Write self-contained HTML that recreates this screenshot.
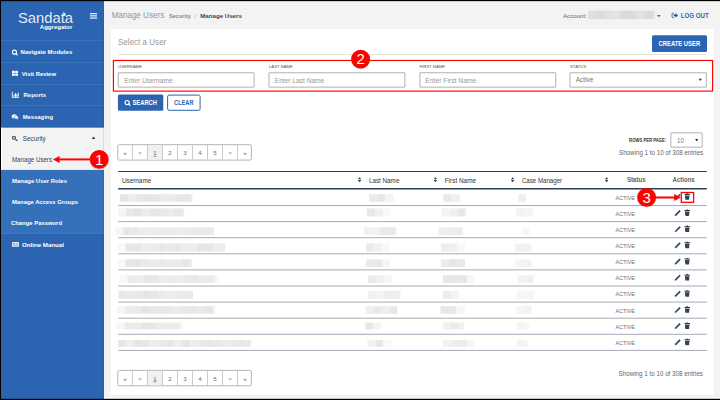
<!DOCTYPE html>
<html><head><meta charset="utf-8"><title>Manage Users</title>
<style>
*{box-sizing:border-box;margin:0;padding:0}
html,body{width:720px;height:400px;overflow:hidden;background:#f3f3f3}
svg{position:absolute;left:0;top:0;font-family:"Liberation Sans","DejaVu Sans",sans-serif}
text{white-space:pre}
</style></head><body>
<svg width="720" height="400" viewBox="0 0 720 400">
<rect x="0.00" y="0.00" width="103.80" height="400.00" fill="#2b64b1"/>
<rect x="1.00" y="40.00" width="102.80" height="0.80" fill="#3f77c2"/>
<rect x="1.00" y="62.00" width="102.80" height="0.80" fill="#3f77c2"/>
<rect x="1.00" y="84.00" width="102.80" height="0.80" fill="#3f77c2"/>
<rect x="1.00" y="105.00" width="102.80" height="0.80" fill="#3f77c2"/>
<rect x="1.00" y="127.40" width="102.80" height="42.50" fill="#f3f3f3"/>
<rect x="1.00" y="127.40" width="1.20" height="42.50" fill="#fff"/>
<rect x="1.00" y="169.20" width="102.80" height="0.70" fill="#fbfbfb"/>
<rect x="1.00" y="126.80" width="102.80" height="0.60" fill="#2559a6"/>
<rect x="1.00" y="169.90" width="102.80" height="64.10" fill="#3570bb"/>
<rect x="1.00" y="233.20" width="102.80" height="0.70" fill="#457cc3"/>
<rect x="102.90" y="0.00" width="0.90" height="127.40" fill="#2259aa"/>
<rect x="102.90" y="169.90" width="0.90" height="64.00" fill="#2d65b2"/>
<rect x="102.90" y="233.90" width="0.90" height="166.10" fill="#2259aa"/>
<text x="20.50" y="54.00" font-size="6.05" font-weight="bold" fill="#fff" textLength="51.80" lengthAdjust="spacingAndGlyphs">Navigate Modules</text>
<text x="21.70" y="75.90" font-size="6.05" font-weight="bold" fill="#fff" textLength="34.30" lengthAdjust="spacingAndGlyphs">Visit Review</text>
<text x="23.60" y="97.20" font-size="6.05" font-weight="bold" fill="#fff" textLength="22.40" lengthAdjust="spacingAndGlyphs">Reports</text>
<text x="22.70" y="119.00" font-size="6.05" font-weight="bold" fill="#fff" textLength="30.30" lengthAdjust="spacingAndGlyphs">Messaging</text>
<text x="22.70" y="140.50" font-size="6.3" fill="#394050" textLength="23.10" lengthAdjust="spacingAndGlyphs">Security</text>
<text x="12.00" y="161.70" font-size="6.3" fill="#394050" textLength="40.00" lengthAdjust="spacingAndGlyphs">Manage Users</text>
<text x="12.00" y="183.00" font-size="6.05" font-weight="bold" fill="#fff" textLength="55.00" lengthAdjust="spacingAndGlyphs">Manage User Roles</text>
<text x="12.00" y="204.40" font-size="6.05" font-weight="bold" fill="#fff" textLength="66.00" lengthAdjust="spacingAndGlyphs">Manage Access Groups</text>
<text x="11.00" y="225.30" font-size="6.05" font-weight="bold" fill="#fff" textLength="51.00" lengthAdjust="spacingAndGlyphs">Change Password</text>
<text x="22.00" y="247.00" font-size="6.05" font-weight="bold" fill="#fff" textLength="42.00" lengthAdjust="spacingAndGlyphs">Online Manual</text>
<text x="18.00" y="23.00" font-size="14.76" fill="#fff" stroke="#2b64b1" stroke-width=".16">Sandata</text>
<path d="M63.4 11.5L66.3 15.1L63.4 15.9Z" fill="#fff" fill-opacity=".92"/>
<text x="39.80" y="29.20" font-size="5.6" font-weight="bold" fill="#fff" textLength="32.60" lengthAdjust="spacingAndGlyphs">Aggregator</text>
<rect x="90.00" y="13.00" width="7.00" height="1.30" fill="#dfe8f5"/>
<rect x="90.00" y="15.20" width="7.00" height="1.30" fill="#dfe8f5"/>
<rect x="90.00" y="17.40" width="7.00" height="1.30" fill="#dfe8f5"/>
<text x="111.70" y="18.20" font-size="8.8" fill="#969696" textLength="52.50" lengthAdjust="spacingAndGlyphs">Manage Users</text>
<text x="169.00" y="17.70" font-size="5.57" font-weight="bold" fill="#888">Security</text>
<text x="194.30" y="17.70" font-size="5.6" fill="#aaa">/</text>
<text x="200.20" y="17.70" font-size="6.15" font-weight="bold" fill="#444">Manage Users</text>
<text x="563.00" y="17.80" font-size="6.17" fill="#666">Account:</text>
<rect x="588.30" y="10.70" width="66.00" height="8.40" fill="#dedede"/>
<text x="680.80" y="17.70" font-size="6.5" font-weight="bold" fill="#2b64b1" textLength="27.95" lengthAdjust="spacingAndGlyphs">LOG OUT</text>
<rect x="111.05" y="28.85" width="602.35" height="366.25" fill="#fff"/>
<text x="118.00" y="45.10" font-size="8.8" fill="#989898" textLength="48.30" lengthAdjust="spacingAndGlyphs">Select a User</text>
<rect x="652.00" y="35.30" width="55.00" height="16.70" fill="#2b64b1" rx="1.5"/>
<text x="658.50" y="46.20" font-size="6.6" font-weight="bold" fill="#fff" textLength="41.70" lengthAdjust="spacingAndGlyphs">CREATE USER</text>
<rect x="118.00" y="54.00" width="589.00" height="0.80" fill="#dcdcdc"/>
<text x="118.10" y="67.70" font-size="4.25" fill="#555" textLength="24.00" lengthAdjust="spacingAndGlyphs">USERNAME</text>
<text x="269.00" y="67.70" font-size="4.25" fill="#555" textLength="23.90" lengthAdjust="spacingAndGlyphs">LAST NAME</text>
<text x="419.40" y="67.70" font-size="4.25" fill="#555" textLength="25.80" lengthAdjust="spacingAndGlyphs">FIRST NAME</text>
<text x="570.00" y="67.70" font-size="4.25" fill="#555" textLength="16.25" lengthAdjust="spacingAndGlyphs">STATUS</text>
<rect x="118.35" y="72.75" width="135.80" height="14.40" fill="#fff" stroke="#a6aaa6" stroke-width=".9" rx="0.3"/>
<rect x="268.95" y="72.75" width="135.90" height="14.40" fill="#fff" stroke="#a6aaa6" stroke-width=".9" rx="0.3"/>
<rect x="419.85" y="72.75" width="135.95" height="14.40" fill="#fff" stroke="#a6aaa6" stroke-width=".9" rx="0.3"/>
<rect x="569.95" y="72.75" width="136.35" height="14.40" fill="#fff" stroke="#a6aaa6" stroke-width=".9" rx="0.3"/>
<text x="124.20" y="82.60" font-size="6.6" fill="#999" textLength="48.50" lengthAdjust="spacingAndGlyphs">Enter Username</text>
<text x="274.80" y="82.60" font-size="6.6" fill="#999" textLength="49.40" lengthAdjust="spacingAndGlyphs">Enter Last Name</text>
<text x="425.30" y="82.60" font-size="6.6" fill="#999" textLength="51.00" lengthAdjust="spacingAndGlyphs">Enter First Name</text>
<text x="575.75" y="82.40" font-size="6.6" fill="#777" textLength="17.75" lengthAdjust="spacingAndGlyphs">Active</text>
<rect x="117.90" y="94.60" width="45.40" height="16.20" fill="#2b64b1" rx="1.5"/>
<text x="132.50" y="105.20" font-size="6.6" font-weight="bold" fill="#fff" textLength="24.50" lengthAdjust="spacingAndGlyphs">SEARCH</text>
<rect x="167.60" y="95.10" width="32.50" height="15.20" fill="#fff" stroke="#2b64b1" stroke-width="1" rx="1.5"/>
<text x="174.10" y="105.20" font-size="6.6" font-weight="bold" fill="#2b64b1" textLength="19.40" lengthAdjust="spacingAndGlyphs">CLEAR</text>
<rect x="117.80" y="144.70" width="133.60" height="15.40" fill="#fff" stroke="#b4b4b4" stroke-width="1" rx="1.5"/>
<rect x="147.80" y="145.20" width="14.60" height="14.40" fill="#f1f1f1"/>
<rect x="131.92" y="145.20" width="0.80" height="14.40" fill="#bdbdbd"/>
<rect x="146.94" y="145.20" width="0.80" height="14.40" fill="#bdbdbd"/>
<rect x="161.96" y="145.20" width="0.80" height="14.40" fill="#bdbdbd"/>
<rect x="176.98" y="145.20" width="0.80" height="14.40" fill="#bdbdbd"/>
<rect x="192.00" y="145.20" width="0.80" height="14.40" fill="#bdbdbd"/>
<rect x="207.02" y="145.20" width="0.80" height="14.40" fill="#bdbdbd"/>
<rect x="222.04" y="145.20" width="0.80" height="14.40" fill="#bdbdbd"/>
<rect x="237.06" y="145.20" width="0.80" height="14.40" fill="#bdbdbd"/>
<text x="125.00" y="154.95" font-size="6.2" fill="#6e6e6e" text-anchor="middle">«</text>
<text x="140.00" y="154.95" font-size="6.2" fill="#6e6e6e" text-anchor="middle">&lt;</text>
<text x="155.00" y="154.95" font-size="6.2" fill="#6e6e6e" text-anchor="middle" text-decoration="underline">1</text>
<text x="170.00" y="154.95" font-size="6.2" fill="#6e6e6e" text-anchor="middle">2</text>
<text x="185.00" y="154.95" font-size="6.2" fill="#6e6e6e" text-anchor="middle">3</text>
<text x="200.00" y="154.95" font-size="6.2" fill="#6e6e6e" text-anchor="middle">4</text>
<text x="215.00" y="154.95" font-size="6.2" fill="#6e6e6e" text-anchor="middle">5</text>
<text x="230.00" y="154.95" font-size="6.2" fill="#6e6e6e" text-anchor="middle">&gt;</text>
<text x="245.00" y="154.95" font-size="6.2" fill="#6e6e6e" text-anchor="middle">»</text>
<rect x="117.80" y="370.40" width="133.60" height="15.40" fill="#fff" stroke="#b4b4b4" stroke-width="1" rx="1.5"/>
<rect x="147.80" y="370.90" width="14.60" height="14.40" fill="#f1f1f1"/>
<rect x="131.92" y="370.90" width="0.80" height="14.40" fill="#bdbdbd"/>
<rect x="146.94" y="370.90" width="0.80" height="14.40" fill="#bdbdbd"/>
<rect x="161.96" y="370.90" width="0.80" height="14.40" fill="#bdbdbd"/>
<rect x="176.98" y="370.90" width="0.80" height="14.40" fill="#bdbdbd"/>
<rect x="192.00" y="370.90" width="0.80" height="14.40" fill="#bdbdbd"/>
<rect x="207.02" y="370.90" width="0.80" height="14.40" fill="#bdbdbd"/>
<rect x="222.04" y="370.90" width="0.80" height="14.40" fill="#bdbdbd"/>
<rect x="237.06" y="370.90" width="0.80" height="14.40" fill="#bdbdbd"/>
<text x="125.00" y="380.65" font-size="6.2" fill="#6e6e6e" text-anchor="middle">«</text>
<text x="140.00" y="380.65" font-size="6.2" fill="#6e6e6e" text-anchor="middle">&lt;</text>
<text x="155.00" y="380.65" font-size="6.2" fill="#6e6e6e" text-anchor="middle" text-decoration="underline">1</text>
<text x="170.00" y="380.65" font-size="6.2" fill="#6e6e6e" text-anchor="middle">2</text>
<text x="185.00" y="380.65" font-size="6.2" fill="#6e6e6e" text-anchor="middle">3</text>
<text x="200.00" y="380.65" font-size="6.2" fill="#6e6e6e" text-anchor="middle">4</text>
<text x="215.00" y="380.65" font-size="6.2" fill="#6e6e6e" text-anchor="middle">5</text>
<text x="230.00" y="380.65" font-size="6.2" fill="#6e6e6e" text-anchor="middle">&gt;</text>
<text x="245.00" y="380.65" font-size="6.2" fill="#6e6e6e" text-anchor="middle">»</text>
<text x="629.10" y="142.40" font-size="4.7" font-weight="bold" fill="#333" textLength="37.20" lengthAdjust="spacingAndGlyphs">ROWS PER PAGE:</text>
<rect x="670.85" y="132.85" width="31.30" height="14.30" fill="#fff" stroke="#a6aaa6" stroke-width=".9" rx="0.3"/>
<text x="677.10" y="143.00" font-size="7.5" fill="#777" textLength="6.80" lengthAdjust="spacingAndGlyphs">10</text>
<text x="619.00" y="155.40" font-size="6.5" fill="#666" textLength="84.00" lengthAdjust="spacingAndGlyphs">Showing 1 to 10 of 308 entries</text>
<text x="618.60" y="376.00" font-size="6.5" fill="#666" textLength="84.40" lengthAdjust="spacingAndGlyphs">Showing 1 to 10 of 308 entries</text>
<rect x="118.20" y="171.00" width="588.60" height="1.00" fill="#2d3e55"/>
<rect x="118.20" y="188.00" width="588.60" height="1.50" fill="#2d3e55"/>
<text x="121.90" y="182.70" font-size="6.3" fill="#333" textLength="29.35" lengthAdjust="spacingAndGlyphs">Username</text>
<text x="368.90" y="182.70" font-size="6.3" fill="#333" textLength="30.50" lengthAdjust="spacingAndGlyphs">Last Name</text>
<text x="444.70" y="182.70" font-size="6.3" fill="#333" textLength="31.40" lengthAdjust="spacingAndGlyphs">First Name</text>
<text x="521.90" y="182.70" font-size="6.3" fill="#333" textLength="40.20" lengthAdjust="spacingAndGlyphs">Case Manager</text>
<text x="626.90" y="182.40" font-size="6.5" font-weight="bold" fill="#636363" textLength="18.70" lengthAdjust="spacingAndGlyphs">Status</text>
<text x="672.60" y="182.40" font-size="6.5" font-weight="bold" fill="#636363" textLength="22.10" lengthAdjust="spacingAndGlyphs">Actions</text>
<rect x="118.20" y="205.00" width="588.60" height="1.00" fill="#a3abb8"/>
<text x="615.60" y="199.80" font-size="6.0" fill="#6a6a6a" textLength="19.20" lengthAdjust="spacingAndGlyphs">ACTIVE</text>
<rect x="118.20" y="221.10" width="588.60" height="1.00" fill="#a3abb8"/>
<text x="615.60" y="215.90" font-size="6.0" fill="#6a6a6a" textLength="19.20" lengthAdjust="spacingAndGlyphs">ACTIVE</text>
<rect x="118.20" y="237.20" width="588.60" height="1.00" fill="#a3abb8"/>
<text x="615.60" y="232.00" font-size="6.0" fill="#6a6a6a" textLength="19.20" lengthAdjust="spacingAndGlyphs">ACTIVE</text>
<rect x="118.20" y="253.30" width="588.60" height="1.00" fill="#a3abb8"/>
<text x="615.60" y="248.10" font-size="6.0" fill="#6a6a6a" textLength="19.20" lengthAdjust="spacingAndGlyphs">ACTIVE</text>
<rect x="118.20" y="269.40" width="588.60" height="1.00" fill="#a3abb8"/>
<text x="615.60" y="264.20" font-size="6.0" fill="#6a6a6a" textLength="19.20" lengthAdjust="spacingAndGlyphs">ACTIVE</text>
<rect x="118.20" y="285.50" width="588.60" height="1.00" fill="#a3abb8"/>
<text x="615.60" y="280.30" font-size="6.0" fill="#6a6a6a" textLength="19.20" lengthAdjust="spacingAndGlyphs">ACTIVE</text>
<rect x="118.20" y="301.60" width="588.60" height="1.00" fill="#a3abb8"/>
<text x="615.60" y="296.40" font-size="6.0" fill="#6a6a6a" textLength="19.20" lengthAdjust="spacingAndGlyphs">ACTIVE</text>
<rect x="118.20" y="317.70" width="588.60" height="1.00" fill="#a3abb8"/>
<text x="615.60" y="312.50" font-size="6.0" fill="#6a6a6a" textLength="19.20" lengthAdjust="spacingAndGlyphs">ACTIVE</text>
<rect x="118.20" y="333.80" width="588.60" height="1.00" fill="#a3abb8"/>
<text x="615.60" y="328.60" font-size="6.0" fill="#6a6a6a" textLength="19.20" lengthAdjust="spacingAndGlyphs">ACTIVE</text>
<rect x="118.20" y="349.90" width="588.60" height="1.00" fill="#a3abb8"/>
<text x="615.60" y="344.70" font-size="6.0" fill="#6a6a6a" textLength="19.20" lengthAdjust="spacingAndGlyphs">ACTIVE</text>
<rect x="588.30" y="10.90" width="8.05" height="8.00" fill="#dfdfdf"/>
<rect x="596.30" y="10.90" width="8.05" height="8.00" fill="#dcdcdc"/>
<rect x="604.30" y="10.90" width="8.05" height="8.00" fill="#e0e0e0"/>
<rect x="612.30" y="10.90" width="8.05" height="8.00" fill="#e4e4e4"/>
<rect x="620.30" y="10.90" width="8.05" height="8.00" fill="#dadada"/>
<rect x="628.30" y="10.90" width="8.05" height="8.00" fill="#dbdbdb"/>
<rect x="636.30" y="10.90" width="8.05" height="8.00" fill="#e2e2e2"/>
<rect x="644.30" y="10.90" width="8.05" height="8.00" fill="#dbdbdb"/>
<rect x="652.30" y="10.90" width="2.15" height="8.00" fill="#dfdfdf"/>
<rect x="119.80" y="194.20" width="8.05" height="7.60" fill="#e5e5e5"/>
<rect x="127.80" y="194.20" width="8.05" height="7.60" fill="#ededed"/>
<rect x="135.80" y="194.20" width="8.05" height="7.60" fill="#e8e8e8"/>
<rect x="143.80" y="194.20" width="8.05" height="7.60" fill="#e5e5e5"/>
<rect x="151.80" y="194.20" width="8.05" height="7.60" fill="#e6e6e6"/>
<rect x="159.80" y="194.20" width="8.05" height="7.60" fill="#ebebeb"/>
<rect x="167.80" y="194.20" width="8.05" height="7.60" fill="#ebebeb"/>
<rect x="175.80" y="194.20" width="8.05" height="7.60" fill="#e6e6e6"/>
<rect x="183.80" y="194.20" width="8.05" height="7.60" fill="#e8e8e8"/>
<rect x="191.80" y="194.20" width="2.45" height="7.60" fill="#f9f9f9"/>
<rect x="369.00" y="194.20" width="8.05" height="7.60" fill="#ececec"/>
<rect x="377.00" y="194.20" width="8.05" height="7.60" fill="#e6e6e6"/>
<rect x="385.00" y="194.20" width="8.05" height="7.60" fill="#f3f3f3"/>
<rect x="393.00" y="194.20" width="0.75" height="7.60" fill="#f5f5f5"/>
<rect x="443.30" y="194.20" width="8.05" height="7.60" fill="#e9e9e9"/>
<rect x="451.30" y="194.20" width="8.05" height="7.60" fill="#f0f0f0"/>
<rect x="459.30" y="194.20" width="0.75" height="7.60" fill="#f0f0f0"/>
<rect x="518.30" y="194.20" width="7.65" height="7.60" fill="#f0f0f0"/>
<rect x="118.00" y="208.40" width="8.05" height="8.00" fill="#f5f5f5"/>
<rect x="126.00" y="208.40" width="8.05" height="8.00" fill="#e8e8e8"/>
<rect x="134.00" y="208.40" width="8.05" height="8.00" fill="#e5e5e5"/>
<rect x="142.00" y="208.40" width="8.05" height="8.00" fill="#ededed"/>
<rect x="150.00" y="208.40" width="8.05" height="8.00" fill="#e7e7e7"/>
<rect x="158.00" y="208.40" width="8.05" height="8.00" fill="#e9e9e9"/>
<rect x="166.00" y="208.40" width="8.05" height="8.00" fill="#ebebeb"/>
<rect x="174.00" y="208.40" width="8.05" height="8.00" fill="#e7e7e7"/>
<rect x="182.00" y="208.40" width="2.25" height="8.00" fill="#ededed"/>
<rect x="366.90" y="208.40" width="8.05" height="8.00" fill="#e7e7e7"/>
<rect x="374.90" y="208.40" width="8.05" height="8.00" fill="#efefef"/>
<rect x="382.90" y="208.40" width="7.95" height="8.00" fill="#f9f9f9"/>
<rect x="441.30" y="208.40" width="8.05" height="8.00" fill="#f3f3f3"/>
<rect x="449.30" y="208.40" width="8.05" height="8.00" fill="#f0f0f0"/>
<rect x="457.30" y="208.40" width="8.05" height="8.00" fill="#e8e8e8"/>
<rect x="465.30" y="208.40" width="1.45" height="8.00" fill="#f9f9f9"/>
<rect x="516.20" y="208.40" width="8.05" height="8.00" fill="#f3f3f3"/>
<rect x="524.20" y="208.40" width="8.05" height="8.00" fill="#f5f5f5"/>
<rect x="532.20" y="208.40" width="0.75" height="8.00" fill="#f1f1f1"/>
<rect x="115.30" y="227.30" width="8.05" height="7.80" fill="#f5f5f5"/>
<rect x="123.30" y="227.30" width="8.05" height="7.80" fill="#e5e5e5"/>
<rect x="131.30" y="227.30" width="8.05" height="7.80" fill="#e8e8e8"/>
<rect x="139.30" y="227.30" width="8.05" height="7.80" fill="#ececec"/>
<rect x="147.30" y="227.30" width="8.05" height="7.80" fill="#ededed"/>
<rect x="155.30" y="227.30" width="8.05" height="7.80" fill="#ebebeb"/>
<rect x="163.30" y="227.30" width="8.05" height="7.80" fill="#eaeaea"/>
<rect x="171.30" y="227.30" width="8.05" height="7.80" fill="#ececec"/>
<rect x="179.30" y="227.30" width="8.05" height="7.80" fill="#ececec"/>
<rect x="187.30" y="227.30" width="8.05" height="7.80" fill="#eaeaea"/>
<rect x="195.30" y="227.30" width="8.05" height="7.80" fill="#e9e9e9"/>
<rect x="203.30" y="227.30" width="8.05" height="7.80" fill="#e8e8e8"/>
<rect x="211.30" y="227.30" width="2.55" height="7.80" fill="#e7e7e7"/>
<rect x="363.70" y="227.30" width="8.05" height="7.80" fill="#f1f1f1"/>
<rect x="371.70" y="227.30" width="8.05" height="7.80" fill="#f2f2f2"/>
<rect x="379.70" y="227.30" width="8.05" height="7.80" fill="#e9e9e9"/>
<rect x="387.70" y="227.30" width="8.05" height="7.80" fill="#e7e7e7"/>
<rect x="395.70" y="227.30" width="1.05" height="7.80" fill="#f7f7f7"/>
<rect x="438.40" y="227.30" width="8.05" height="7.80" fill="#eeeeee"/>
<rect x="446.40" y="227.30" width="8.05" height="7.80" fill="#ededed"/>
<rect x="454.40" y="227.30" width="8.05" height="7.80" fill="#ebebeb"/>
<rect x="462.40" y="227.30" width="0.85" height="7.80" fill="#f1f1f1"/>
<rect x="521.50" y="227.30" width="7.95" height="7.80" fill="#f7f7f7"/>
<rect x="117.60" y="243.50" width="8.05" height="8.10" fill="#f9f9f9"/>
<rect x="125.60" y="243.50" width="8.05" height="8.10" fill="#e6e6e6"/>
<rect x="133.60" y="243.50" width="8.05" height="8.10" fill="#e6e6e6"/>
<rect x="141.60" y="243.50" width="8.05" height="8.10" fill="#ededed"/>
<rect x="149.60" y="243.50" width="8.05" height="8.10" fill="#ebebeb"/>
<rect x="157.60" y="243.50" width="8.05" height="8.10" fill="#e7e7e7"/>
<rect x="165.60" y="243.50" width="8.05" height="8.10" fill="#eaeaea"/>
<rect x="173.60" y="243.50" width="8.05" height="8.10" fill="#e7e7e7"/>
<rect x="181.60" y="243.50" width="8.05" height="8.10" fill="#ececec"/>
<rect x="189.60" y="243.50" width="8.05" height="8.10" fill="#ebebeb"/>
<rect x="197.60" y="243.50" width="8.05" height="8.10" fill="#e5e5e5"/>
<rect x="205.60" y="243.50" width="8.05" height="8.10" fill="#e6e6e6"/>
<rect x="213.60" y="243.50" width="8.05" height="8.10" fill="#ededed"/>
<rect x="221.60" y="243.50" width="3.45" height="8.10" fill="#eaeaea"/>
<rect x="366.00" y="243.50" width="8.05" height="8.10" fill="#ebebeb"/>
<rect x="374.00" y="243.50" width="8.05" height="8.10" fill="#f1f1f1"/>
<rect x="382.00" y="243.50" width="8.05" height="8.10" fill="#f9f9f9"/>
<rect x="441.00" y="243.50" width="8.05" height="8.10" fill="#ededed"/>
<rect x="449.00" y="243.50" width="8.05" height="8.10" fill="#efefef"/>
<rect x="457.00" y="243.50" width="8.05" height="8.10" fill="#f8f8f8"/>
<rect x="515.40" y="243.50" width="8.05" height="8.10" fill="#f1f1f1"/>
<rect x="523.40" y="243.50" width="8.05" height="8.10" fill="#f1f1f1"/>
<rect x="117.60" y="259.30" width="8.05" height="7.70" fill="#f8f8f8"/>
<rect x="125.60" y="259.30" width="8.05" height="7.70" fill="#e6e6e6"/>
<rect x="133.60" y="259.30" width="8.05" height="7.70" fill="#e5e5e5"/>
<rect x="141.60" y="259.30" width="8.05" height="7.70" fill="#e9e9e9"/>
<rect x="149.60" y="259.30" width="8.05" height="7.70" fill="#ececec"/>
<rect x="157.60" y="259.30" width="8.05" height="7.70" fill="#e9e9e9"/>
<rect x="165.60" y="259.30" width="8.05" height="7.70" fill="#ebebeb"/>
<rect x="173.60" y="259.30" width="8.05" height="7.70" fill="#eaeaea"/>
<rect x="181.60" y="259.30" width="8.05" height="7.70" fill="#e5e5e5"/>
<rect x="189.60" y="259.30" width="2.35" height="7.70" fill="#ececec"/>
<rect x="366.00" y="259.30" width="8.05" height="7.70" fill="#ebebeb"/>
<rect x="374.00" y="259.30" width="8.05" height="7.70" fill="#e8e8e8"/>
<rect x="382.00" y="259.30" width="8.05" height="7.70" fill="#f5f5f5"/>
<rect x="441.00" y="259.30" width="8.05" height="7.70" fill="#ededed"/>
<rect x="449.00" y="259.30" width="8.05" height="7.70" fill="#e6e6e6"/>
<rect x="457.00" y="259.30" width="8.05" height="7.70" fill="#e9e9e9"/>
<rect x="515.40" y="259.30" width="8.05" height="7.70" fill="#f4f4f4"/>
<rect x="523.40" y="259.30" width="8.05" height="7.70" fill="#f2f2f2"/>
<rect x="119.30" y="275.20" width="8.05" height="7.80" fill="#f8f8f8"/>
<rect x="127.30" y="275.20" width="8.05" height="7.80" fill="#ebebeb"/>
<rect x="135.30" y="275.20" width="8.05" height="7.80" fill="#ececec"/>
<rect x="143.30" y="275.20" width="8.05" height="7.80" fill="#e6e6e6"/>
<rect x="151.30" y="275.20" width="8.05" height="7.80" fill="#e7e7e7"/>
<rect x="159.30" y="275.20" width="8.05" height="7.80" fill="#ececec"/>
<rect x="167.30" y="275.20" width="8.05" height="7.80" fill="#ebebeb"/>
<rect x="175.30" y="275.20" width="8.05" height="7.80" fill="#ededed"/>
<rect x="183.30" y="275.20" width="8.05" height="7.80" fill="#e9e9e9"/>
<rect x="191.30" y="275.20" width="8.05" height="7.80" fill="#e7e7e7"/>
<rect x="199.30" y="275.20" width="8.05" height="7.80" fill="#ebebeb"/>
<rect x="207.30" y="275.20" width="8.05" height="7.80" fill="#ededed"/>
<rect x="215.30" y="275.20" width="2.95" height="7.80" fill="#f8f8f8"/>
<rect x="368.00" y="275.20" width="8.05" height="7.80" fill="#ebebeb"/>
<rect x="376.00" y="275.20" width="8.05" height="7.80" fill="#f0f0f0"/>
<rect x="384.00" y="275.20" width="8.05" height="7.80" fill="#f6f6f6"/>
<rect x="443.00" y="275.20" width="8.05" height="7.80" fill="#e8e8e8"/>
<rect x="451.00" y="275.20" width="8.05" height="7.80" fill="#e7e7e7"/>
<rect x="459.00" y="275.20" width="8.05" height="7.80" fill="#e8e8e8"/>
<rect x="467.00" y="275.20" width="7.45" height="7.80" fill="#f6f6f6"/>
<rect x="517.20" y="275.20" width="8.05" height="7.80" fill="#f3f3f3"/>
<rect x="525.20" y="275.20" width="8.05" height="7.80" fill="#f0f0f0"/>
<rect x="533.20" y="275.20" width="0.85" height="7.80" fill="#f7f7f7"/>
<rect x="118.60" y="290.80" width="8.05" height="8.10" fill="#e7e7e7"/>
<rect x="126.60" y="290.80" width="8.05" height="8.10" fill="#e9e9e9"/>
<rect x="134.60" y="290.80" width="8.05" height="8.10" fill="#e9e9e9"/>
<rect x="142.60" y="290.80" width="8.05" height="8.10" fill="#e5e5e5"/>
<rect x="150.60" y="290.80" width="8.05" height="8.10" fill="#e7e7e7"/>
<rect x="158.60" y="290.80" width="8.05" height="8.10" fill="#ebebeb"/>
<rect x="166.60" y="290.80" width="8.05" height="8.10" fill="#ededed"/>
<rect x="174.60" y="290.80" width="8.05" height="8.10" fill="#eaeaea"/>
<rect x="182.60" y="290.80" width="8.05" height="8.10" fill="#eaeaea"/>
<rect x="190.60" y="290.80" width="2.35" height="8.10" fill="#e7e7e7"/>
<rect x="368.00" y="290.80" width="8.05" height="8.10" fill="#f1f1f1"/>
<rect x="376.00" y="290.80" width="8.05" height="8.10" fill="#f3f3f3"/>
<rect x="384.00" y="290.80" width="8.05" height="8.10" fill="#eeeeee"/>
<rect x="392.00" y="290.80" width="8.05" height="8.10" fill="#efefef"/>
<rect x="400.00" y="290.80" width="0.85" height="8.10" fill="#f5f5f5"/>
<rect x="443.00" y="290.80" width="8.05" height="8.10" fill="#ededed"/>
<rect x="451.00" y="290.80" width="7.85" height="8.10" fill="#f3f3f3"/>
<rect x="517.00" y="290.80" width="8.05" height="8.10" fill="#f6f6f6"/>
<rect x="525.00" y="290.80" width="8.05" height="8.10" fill="#f6f6f6"/>
<rect x="533.00" y="290.80" width="1.05" height="8.10" fill="#f6f6f6"/>
<rect x="117.00" y="306.20" width="8.05" height="7.60" fill="#f5f5f5"/>
<rect x="125.00" y="306.20" width="8.05" height="7.60" fill="#ececec"/>
<rect x="133.00" y="306.20" width="8.05" height="7.60" fill="#ebebeb"/>
<rect x="141.00" y="306.20" width="8.05" height="7.60" fill="#e5e5e5"/>
<rect x="149.00" y="306.20" width="8.05" height="7.60" fill="#e8e8e8"/>
<rect x="157.00" y="306.20" width="8.05" height="7.60" fill="#e6e6e6"/>
<rect x="165.00" y="306.20" width="8.05" height="7.60" fill="#e8e8e8"/>
<rect x="173.00" y="306.20" width="8.05" height="7.60" fill="#ececec"/>
<rect x="181.00" y="306.20" width="8.05" height="7.60" fill="#e7e7e7"/>
<rect x="189.00" y="306.20" width="8.05" height="7.60" fill="#e6e6e6"/>
<rect x="197.00" y="306.20" width="8.05" height="7.60" fill="#eaeaea"/>
<rect x="205.00" y="306.20" width="8.05" height="7.60" fill="#e5e5e5"/>
<rect x="213.00" y="306.20" width="2.75" height="7.60" fill="#f5f5f5"/>
<rect x="365.30" y="306.20" width="8.05" height="7.60" fill="#efefef"/>
<rect x="373.30" y="306.20" width="8.05" height="7.60" fill="#e8e8e8"/>
<rect x="381.30" y="306.20" width="8.05" height="7.60" fill="#eeeeee"/>
<rect x="389.30" y="306.20" width="8.05" height="7.60" fill="#e7e7e7"/>
<rect x="397.30" y="306.20" width="0.75" height="7.60" fill="#f9f9f9"/>
<rect x="440.60" y="306.20" width="8.05" height="7.60" fill="#e6e6e6"/>
<rect x="448.60" y="306.20" width="8.05" height="7.60" fill="#e7e7e7"/>
<rect x="456.60" y="306.20" width="8.05" height="7.60" fill="#f6f6f6"/>
<rect x="515.50" y="306.20" width="8.05" height="7.60" fill="#f6f6f6"/>
<rect x="523.50" y="306.20" width="7.95" height="7.60" fill="#f2f2f2"/>
<rect x="116.50" y="322.50" width="8.05" height="7.00" fill="#f7f7f7"/>
<rect x="124.50" y="322.50" width="8.05" height="7.00" fill="#eaeaea"/>
<rect x="132.50" y="322.50" width="8.05" height="7.00" fill="#ececec"/>
<rect x="140.50" y="322.50" width="8.05" height="7.00" fill="#e6e6e6"/>
<rect x="148.50" y="322.50" width="8.05" height="7.00" fill="#e6e6e6"/>
<rect x="156.50" y="322.50" width="8.05" height="7.00" fill="#ececec"/>
<rect x="164.50" y="322.50" width="8.05" height="7.00" fill="#ececec"/>
<rect x="172.50" y="322.50" width="8.05" height="7.00" fill="#ececec"/>
<rect x="180.50" y="322.50" width="2.05" height="7.00" fill="#f7f7f7"/>
<rect x="365.30" y="322.50" width="8.05" height="7.00" fill="#e7e7e7"/>
<rect x="373.30" y="322.50" width="7.75" height="7.00" fill="#f5f5f5"/>
<rect x="443.00" y="322.50" width="8.05" height="7.00" fill="#f1f1f1"/>
<rect x="451.00" y="322.50" width="8.05" height="7.00" fill="#ebebeb"/>
<rect x="459.00" y="322.50" width="5.05" height="7.00" fill="#f1f1f1"/>
<rect x="516.80" y="322.50" width="8.05" height="7.00" fill="#f4f4f4"/>
<rect x="524.80" y="322.50" width="5.25" height="7.00" fill="#f7f7f7"/>
<rect x="118.20" y="340.00" width="8.05" height="7.00" fill="#e7e7e7"/>
<rect x="126.20" y="340.00" width="8.05" height="7.00" fill="#ededed"/>
<rect x="134.20" y="340.00" width="8.05" height="7.00" fill="#e5e5e5"/>
<rect x="142.20" y="340.00" width="8.05" height="7.00" fill="#e8e8e8"/>
<rect x="150.20" y="340.00" width="8.05" height="7.00" fill="#ededed"/>
<rect x="158.20" y="340.00" width="8.05" height="7.00" fill="#eaeaea"/>
<rect x="166.20" y="340.00" width="8.05" height="7.00" fill="#e7e7e7"/>
<rect x="174.20" y="340.00" width="8.05" height="7.00" fill="#ededed"/>
<rect x="182.20" y="340.00" width="8.05" height="7.00" fill="#e5e5e5"/>
<rect x="190.20" y="340.00" width="8.05" height="7.00" fill="#ededed"/>
<rect x="198.20" y="340.00" width="8.05" height="7.00" fill="#e9e9e9"/>
<rect x="206.20" y="340.00" width="8.05" height="7.00" fill="#e6e6e6"/>
<rect x="214.20" y="340.00" width="8.05" height="7.00" fill="#e9e9e9"/>
<rect x="222.20" y="340.00" width="8.05" height="7.00" fill="#ededed"/>
<rect x="230.20" y="340.00" width="8.05" height="7.00" fill="#eaeaea"/>
<rect x="238.20" y="340.00" width="8.05" height="7.00" fill="#e7e7e7"/>
<rect x="246.20" y="340.00" width="5.05" height="7.00" fill="#eaeaea"/>
<rect x="367.40" y="340.00" width="8.05" height="7.00" fill="#f2f2f2"/>
<rect x="375.40" y="340.00" width="8.05" height="7.00" fill="#e9e9e9"/>
<rect x="383.40" y="340.00" width="8.05" height="7.00" fill="#f9f9f9"/>
<rect x="443.00" y="340.00" width="8.05" height="7.00" fill="#f2f2f2"/>
<rect x="451.00" y="340.00" width="8.05" height="7.00" fill="#eeeeee"/>
<rect x="459.00" y="340.00" width="8.05" height="7.00" fill="#ebebeb"/>
<rect x="467.00" y="340.00" width="7.65" height="7.00" fill="#f6f6f6"/>
<rect x="516.80" y="340.00" width="8.05" height="7.00" fill="#f3f3f3"/>
<rect x="524.80" y="340.00" width="2.55" height="7.00" fill="#f3f3f3"/>
<circle cx="14.47" cy="52.17" r="2.02" fill="none" stroke="#fff" stroke-width="1.1"/>
<line x1="15.98" y1="53.68" x2="17.20" y2="54.90" stroke="#fff" stroke-width="1.265" stroke-linecap="round"/>
<rect x="12.00" y="70.80" width="2.80" height="2.30" fill="#fff"/>
<rect x="12.00" y="73.50" width="2.80" height="2.30" fill="#fff"/>
<rect x="15.20" y="70.80" width="2.80" height="2.30" fill="#fff"/>
<rect x="15.20" y="73.50" width="2.80" height="2.30" fill="#fff"/>
<path d="M12.3 91.9V97.4H18.8" fill="none" stroke="#fff" stroke-width="0.9"/>
<rect x="13.60" y="94.60" width="1.00" height="2.10" fill="#fff"/>
<rect x="15.00" y="93.20" width="1.00" height="3.50" fill="#fff"/>
<rect x="16.40" y="94.00" width="1.00" height="2.70" fill="#fff"/>
<rect x="17.70" y="92.60" width="1.00" height="4.10" fill="#fff"/>
<ellipse cx="14.4" cy="116.2" rx="2.6" ry="1.9" fill="#fff"/><path d="M12.6 117.3L12 118.8L14 117.9Z" fill="#fff"/>
<ellipse cx="16.3" cy="117.4" rx="2.1" ry="1.6" fill="#fff" stroke="#2b64b1" stroke-width=".5"/><path d="M17.4 118.4L18.3 119.5L16.4 118.9Z" fill="#fff"/>
<circle cx="14" cy="137.8" r="1.5" fill="none" stroke="#444" stroke-width="1.1"/><path d="M15.2 139L17.6 140.6M16.6 140L16 141" fill="none" stroke="#444" stroke-width="1"/>
<path d="M91.7 139L93.5 136.6L95.3 139Z" fill="#333"/>
<rect x="12" y="242.1" width="7" height="4.7" fill="#e3ebf7" rx=".4"/><rect x="13" y="243.1" width="2" height="1.6" fill="#7fa3d6"/><rect x="15.6" y="243.1" width="2.6" height=".5" fill="#7fa3d6"/><rect x="15.6" y="244.2" width="2.6" height=".5" fill="#7fa3d6"/><rect x="13" y="245.3" width="5.2" height=".5" fill="#7fa3d6"/>
<path d="M656.9 15H660.7L658.8 17.3Z" fill="#666"/>
<path d="M674 13.2H672.9Q672 13.2 672 14.1V16.7Q672 17.6 672.9 17.6H674" fill="none" stroke="#24509f" stroke-width=".8"/><path d="M673.6 14.6H675.6V13L678 15.4L675.6 17.8V16.2H673.6Z" fill="#24509f"/>
<circle cx="127.16" cy="102.56" r="2.09" fill="none" stroke="#fff" stroke-width="1.15"/>
<line x1="128.73" y1="104.13" x2="130.00" y2="105.40" stroke="#fff" stroke-width="1.3224999999999998" stroke-linecap="round"/>
<path d="M698.7 78.7H701.9L700.3 81.1Z" fill="#333"/>
<path d="M695.1 139H698.3L696.7 141.4Z" fill="#333"/>
<path d="M357.90000000000003 179.3L359.6 177.2L361.3 179.3ZM357.90000000000003 180.1L359.6 182.2L361.3 180.1Z" fill="#2d3b55"/>
<path d="M433.7 179.3L435.4 177.2L437.09999999999997 179.3ZM433.7 180.1L435.4 182.2L437.09999999999997 180.1Z" fill="#2d3b55"/>
<path d="M510.90000000000003 179.3L512.6 177.2L514.3000000000001 179.3ZM510.90000000000003 180.1L512.6 182.2L514.3000000000001 180.1Z" fill="#2d3b55"/>
<path d="M604.9 179.3L606.6 177.2L608.3000000000001 179.3ZM604.9 180.1L606.6 182.2L608.3000000000001 180.1Z" fill="#2d3b55"/>
<path d="M675.4 199.20L680.1 194.50" stroke="#323f59" stroke-width="1.65" fill="none"/><path d="M674.7 199.90L675 198.60L676 199.60Z" fill="#323f59"/>
<path d="M684.4 193.90H686.2V193.30H688.2V193.90H690V194.90H684.4ZM684.9 195.40H689.5L689.1 199.20Q689.1 199.80 688.5 199.80H685.9Q685.3 199.80 685.3 199.20Z" fill="#323f59"/>
<path d="M675.4 215.35L680.1 210.65" stroke="#323f59" stroke-width="1.65" fill="none"/><path d="M674.7 216.05L675 214.75L676 215.75Z" fill="#323f59"/>
<path d="M684.4 210.05H686.2V209.45H688.2V210.05H690V211.05H684.4ZM684.9 211.55H689.5L689.1 215.35Q689.1 215.95 688.5 215.95H685.9Q685.3 215.95 685.3 215.35Z" fill="#323f59"/>
<path d="M675.4 231.50L680.1 226.80" stroke="#323f59" stroke-width="1.65" fill="none"/><path d="M674.7 232.20L675 230.90L676 231.90Z" fill="#323f59"/>
<path d="M684.4 226.20H686.2V225.60H688.2V226.20H690V227.20H684.4ZM684.9 227.70H689.5L689.1 231.50Q689.1 232.10 688.5 232.10H685.9Q685.3 232.10 685.3 231.50Z" fill="#323f59"/>
<path d="M675.4 247.65L680.1 242.95" stroke="#323f59" stroke-width="1.65" fill="none"/><path d="M674.7 248.35L675 247.05L676 248.05Z" fill="#323f59"/>
<path d="M684.4 242.35H686.2V241.75H688.2V242.35H690V243.35H684.4ZM684.9 243.85H689.5L689.1 247.65Q689.1 248.25 688.5 248.25H685.9Q685.3 248.25 685.3 247.65Z" fill="#323f59"/>
<path d="M675.4 263.80L680.1 259.10" stroke="#323f59" stroke-width="1.65" fill="none"/><path d="M674.7 264.50L675 263.20L676 264.20Z" fill="#323f59"/>
<path d="M684.4 258.50H686.2V257.90H688.2V258.50H690V259.50H684.4ZM684.9 260.00H689.5L689.1 263.80Q689.1 264.40 688.5 264.40H685.9Q685.3 264.40 685.3 263.80Z" fill="#323f59"/>
<path d="M675.4 279.95L680.1 275.25" stroke="#323f59" stroke-width="1.65" fill="none"/><path d="M674.7 280.65L675 279.35L676 280.35Z" fill="#323f59"/>
<path d="M684.4 274.65H686.2V274.05H688.2V274.65H690V275.65H684.4ZM684.9 276.15H689.5L689.1 279.95Q689.1 280.55 688.5 280.55H685.9Q685.3 280.55 685.3 279.95Z" fill="#323f59"/>
<path d="M675.4 296.10L680.1 291.40" stroke="#323f59" stroke-width="1.65" fill="none"/><path d="M674.7 296.80L675 295.50L676 296.50Z" fill="#323f59"/>
<path d="M684.4 290.80H686.2V290.20H688.2V290.80H690V291.80H684.4ZM684.9 292.30H689.5L689.1 296.10Q689.1 296.70 688.5 296.70H685.9Q685.3 296.70 685.3 296.10Z" fill="#323f59"/>
<path d="M675.4 312.25L680.1 307.55" stroke="#323f59" stroke-width="1.65" fill="none"/><path d="M674.7 312.95L675 311.65L676 312.65Z" fill="#323f59"/>
<path d="M684.4 306.95H686.2V306.35H688.2V306.95H690V307.95H684.4ZM684.9 308.45H689.5L689.1 312.25Q689.1 312.85 688.5 312.85H685.9Q685.3 312.85 685.3 312.25Z" fill="#323f59"/>
<path d="M675.4 328.40L680.1 323.70" stroke="#323f59" stroke-width="1.65" fill="none"/><path d="M674.7 329.10L675 327.80L676 328.80Z" fill="#323f59"/>
<path d="M684.4 323.10H686.2V322.50H688.2V323.10H690V324.10H684.4ZM684.9 324.60H689.5L689.1 328.40Q689.1 329.00 688.5 329.00H685.9Q685.3 329.00 685.3 328.40Z" fill="#323f59"/>
<path d="M675.4 344.55L680.1 339.85" stroke="#323f59" stroke-width="1.65" fill="none"/><path d="M674.7 345.25L675 343.95L676 344.95Z" fill="#323f59"/>
<path d="M684.4 339.25H686.2V338.65H688.2V339.25H690V340.25H684.4ZM684.9 340.75H689.5L689.1 344.55Q689.1 345.15 688.5 345.15H685.9Q685.3 345.15 685.3 344.55Z" fill="#323f59"/>
<rect x="113.4" y="60.45" width="599.2" height="30.65" fill="none" stroke="#f00" stroke-width="1.15"/>
<rect x="681.3" y="192.5" width="12.3" height="9.8" fill="none" stroke="#f00" stroke-width="1.3"/>
<path d="M59 159.4H91" stroke="#f00" stroke-width="2" fill="none"/><path d="M52.9 159.4L59.6 155.9V162.9Z" fill="#f00"/>
<circle cx="99.2" cy="160.1" r="9.6" fill="#000" fill-opacity=".13"/>
<circle cx="99.2" cy="159.4" r="9.45" fill="#f00"/>
<text x="99.2" y="164.65" font-size="15" fill="#fff" text-anchor="middle">1</text>
<circle cx="360.6" cy="59.800000000000004" r="9.6" fill="#000" fill-opacity=".13"/>
<circle cx="360.6" cy="59.1" r="9.45" fill="#f00"/>
<text x="360.6" y="64.35" font-size="15" fill="#fff" text-anchor="middle">2</text>
<path d="M655 197.5H675" stroke="#f00" stroke-width="2" fill="none"/><path d="M680.8 197.5L674.2 194V201Z" fill="#f00"/>
<circle cx="646.6" cy="198.1" r="9.6" fill="#000" fill-opacity=".13"/>
<circle cx="646.6" cy="197.4" r="9.45" fill="#f00"/>
<text x="646.6" y="202.65" font-size="15" fill="#fff" text-anchor="middle">3</text>
<!--OVERLAY-->
<rect x="0" y="1" width="720" height="1" fill="#000" fill-opacity=".16"/>
<rect x="0" y="0" width="720" height="1" fill="#000"/>
<rect x="0" y="0" width="1" height="400" fill="#000"/>
<rect x="104" y="398" width="616" height=".8" fill="#fff" fill-opacity=".7"/>
<rect x="0" y="398.8" width="720" height="1.2" fill="#000"/>
</svg>
</body></html>
